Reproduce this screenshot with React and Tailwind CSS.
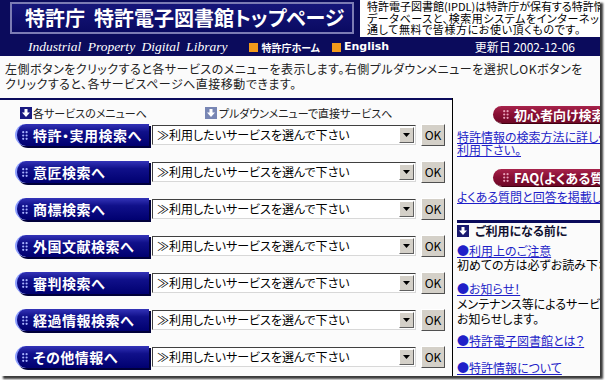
import React from 'react';

const services = [
    '特許・実用検索へ',
    '意匠検索へ',
    '商標検索へ',
    '外国文献検索へ',
    '審判検索へ',
    '経過情報検索へ',
    'その他情報へ',
];

function Dots({ color = '#a8b4ff' }) {
    return (
        <svg width="6" height="9" viewBox="0 0 6 9" className="shrink-0">
            <circle cx="1.2" cy="1.2" r="1.1" fill={color} />
            <circle cx="4.6" cy="1.2" r="1.1" fill={color} />
            <circle cx="1.2" cy="4.5" r="1.1" fill={color} />
            <circle cx="4.6" cy="4.5" r="1.1" fill={color} />
            <circle cx="1.2" cy="7.8" r="1.1" fill={color} />
            <circle cx="4.6" cy="7.8" r="1.1" fill={color} />
        </svg>
    );
}

function DownIcon({ bg }) {
    return (
        <span className={`w-[12px] h-[12px] ${bg} flex items-center justify-center shrink-0`}>
            <svg width="10" height="10" viewBox="0 0 10 10">
                <path d="M3.5 1h3v3.5h2.5L5 9 1 4.5h2.5z" fill="#fff" />
            </svg>
        </span>
    );
}

function ServiceRow({ label }) {
    return (
        <div className="flex items-center h-[22px]">
            <div className="w-[134px] h-[22px] rounded-l-full bg-[linear-gradient(#3434b8,#10108a_35%,#000070)] border-l-2 border-[#8fa0ff] shadow-[2px_2px_0_#00003a] flex items-center gap-[5px] pl-[5px]">
                <Dots />
                <span className="text-white font-bold text-[14px] tracking-[0.5px] whitespace-nowrap">{label}</span>
            </div>
            <div className="ml-[3px] w-[264px] h-[20px] bg-white border border-t-[#404040] border-l-[#404040] border-r-[#d8d8d8] border-b-[#d8d8d8] flex items-center">
                <span className="flex-1 pl-[4px] text-[12px] text-black whitespace-nowrap overflow-hidden">≫利用したいサービスを選んで下さい</span>
                <span className="w-[15px] h-[16px] mr-[1px] bg-[#d4d0c8] border border-t-white border-l-white border-r-[#606060] border-b-[#606060] flex items-center justify-center">
                    <svg width="7" height="4" viewBox="0 0 7 4"><path d="M0 0h7L3.5 4z" fill="#000" /></svg>
                </span>
            </div>
            <div className="ml-[5px] w-[24px] h-[22px] bg-[#d4d0c8] border border-t-white border-l-white border-r-[#505050] border-b-[#505050] flex items-center justify-center text-[12px] text-black">
                OK
            </div>
        </div>
    );
}

function RedPill({ children }) {
    return (
        <div className="ml-[36px] h-[17px] rounded-l-full bg-[linear-gradient(#a8244c,#8a1035_45%,#6e0826)] flex items-center gap-[5px] pl-[10px] shadow-[1px_1px_0_#400010]">
            <Dots color="#e8a0b8" />
            <span className="text-white font-bold text-[13px] whitespace-nowrap">{children}</span>
        </div>
    );
}

export default function App() {
    return (
        <div className="w-[605px] h-[380px] bg-white overflow-hidden [font-family:'Noto_Sans_CJK_JP',sans-serif] [font-feature-settings:'palt']">
            <div className="w-[600px] h-[376px] bg-[#fbfbfb] shadow-[3px_3px_2px_#3a3a3a] overflow-hidden flex flex-col">
                {/* header */}
                <div className="h-[56px] bg-[#0b0b5c] flex flex-col shrink-0">
                    <div className="h-[37px] flex">
                        <div className="ml-[10px] mt-[2px] w-[344px] h-[32px] border-2 border-[#7c7cb4] bg-[linear-gradient(#16167a,#0a0a62)] flex items-center pl-[13px]">
                            <span className="text-white font-bold text-[20px] whitespace-nowrap leading-none">特許庁&nbsp;&nbsp;特許電子図書館トップページ</span>
                        </div>
                        <div className="ml-auto w-[240px] h-[37px] bg-white pl-[7px] pt-[1px] text-[11px] leading-[11.5px] text-black whitespace-nowrap overflow-hidden">
                            <p className="h-[11.5px]">特許電子図書館(IPDL)は特許庁が保有する特許情報</p>
                            <p className="h-[11.5px] tracking-[0.6px]">データベースと、検索用システムをインターネットを</p>
                            <p className="h-[11.5px] tracking-[0.6px]">通して無料で皆様方にお使い頂くものです。</p>
                        </div>
                    </div>
                    <div className="flex-1 flex items-center text-white">
                        <span className="ml-[28px] [font-family:'Liberation_Serif',serif] italic text-[13.5px] [word-spacing:3px] whitespace-nowrap">Industrial Property Digital Library</span>
                        <span className="ml-[22px] w-[9px] h-[9px] bg-[#f29a1a]" />
                        <span className="ml-[3px] text-[10px] font-bold">特許庁ホーム</span>
                        <span className="ml-[12px] w-[9px] h-[9px] bg-[#f29a1a]" />
                        <span className="ml-[3px] [font-family:'DejaVu_Sans',sans-serif] text-[11px] font-bold">English</span>
                        <span className="ml-auto mr-[25px] text-[12px]">更新日 2002-12-06</span>
                    </div>
                </div>

                {/* description */}
                <div className="h-[42px] pl-[5px] pt-[5px] text-[12px] leading-[15px] tracking-[0.5px] text-[#222] whitespace-nowrap shrink-0">
                    <p>左側ボタンをクリックすると各サービスのメニューを表示します。右側プルダウンメニューを選択しOKボタンを</p>
                    <p>クリックすると、各サービスページへ直接移動できます。</p>
                </div>

                <div className="flex flex-1 min-h-0">
                    {/* services */}
                    <div className="w-[452px] border-t-2 border-[#0b0b5c] pl-[15px] pt-[6px] shrink-0">
                        <div className="flex items-center h-[14px] text-[11px] text-[#222]">
                            <span className="ml-[5px] flex items-center gap-[1px]"><DownIcon bg="bg-[#1a1a80]" />各サービスのメニューへ</span>
                            <span className="ml-[58px] flex items-center gap-[2px]"><DownIcon bg="bg-[#7886b4]" />プルダウンメニューで直接サービスへ</span>
                        </div>
                        <div className="mt-[4px] flex flex-col gap-[15px]">
                            {services.map((s) => (
                                <ServiceRow key={s} label={s} />
                            ))}
                        </div>
                    </div>

                    {/* sidebar */}
                    <div className="flex-1 border-l border-black pl-[4px] pt-[8px] text-[12px] whitespace-nowrap overflow-hidden">
                        <RedPill>初心者向け検索</RedPill>
                        <a className="block mt-[7px] h-[26px] leading-[13px] text-[#1f1fc8] underline">特許情報の検索方法に詳しくない方はこちらをご<br />利用下さい。</a>
                        <div className="mt-[13px]"><RedPill>FAQ(よくある質問と回答)</RedPill></div>
                        <a className="block mt-[4px] h-[13px] leading-[13px] text-[#1f1fc8] underline">よくある質問と回答を掲載しています。</a>
                        <div className="mt-[17px] border-t-[3px] border-[#0b0b5c] pt-[1px] flex items-center gap-[6px] h-[18px]">
                            <DownIcon bg="bg-[#1a1a70]" />
                            <span className="font-bold text-[12px] leading-[14px] text-[#101030]">ご利用になる前に</span>
                        </div>
                        <a className="block mt-[6px] h-[14px] leading-[14px] text-[#1f1fc8] underline">●利用上のご注意</a>
                        <p className="h-[14px] leading-[14px] text-black">初めての方は必ずお読み下さい。</p>
                        <a className="block mt-[10px] h-[14px] leading-[14px] text-[#1f1fc8] underline">●お知らせ！</a>
                        <p className="h-[30px] leading-[15px] text-black">メンテナンス等によるサービスの停止を<br />お知らせします。</p>
                        <a className="block mt-[8px] h-[14px] leading-[14px] text-[#1f1fc8] underline">●特許電子図書館とは？</a>
                        <a className="block mt-[13px] h-[14px] leading-[14px] text-[#1f1fc8] underline">●特許情報について</a>
                    </div>
                </div>
            </div>
        </div>
    );
}
